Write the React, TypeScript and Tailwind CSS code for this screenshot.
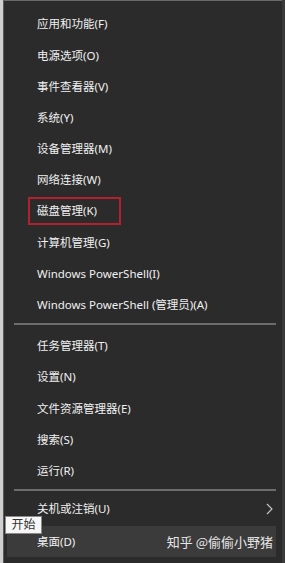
import React from "react";

const font = '"Noto Sans", "Noto Sans CJK SC", sans-serif';

const group1 = [
  "应用和功能(F)",
  "电源选项(O)",
  "事件查看器(V)",
  "系统(Y)",
  "设备管理器(M)",
  "网络连接(W)",
  "磁盘管理(K)",
  "计算机管理(G)",
  "Windows PowerShell(I)",
  "Windows PowerShell (管理员)(A)",
];
const group2 = ["任务管理器(T)", "设置(N)", "文件资源管理器(E)", "搜索(S)", "运行(R)"];

function Item({ label, boxed }: { label: string; boxed?: boolean }) {
  return (
    <div className="relative flex h-[31.2px] items-center pl-[33px] text-[11.5px] text-[#f0f0f0]">
      {boxed && (
        <div className="absolute left-[24px] top-[1.4px] h-[28px] w-[93px] border-2 border-[#b3202f]" />
      )}
      <span className="relative">{label}</span>
    </div>
  );
}

export default function App() {
  return (
    <div
      className="relative flex h-[563px] w-[285px] overflow-hidden bg-[#2b2b2b]"
      style={{ fontFamily: font }}
    >
      <div className="w-[3px] bg-[#cfcfcf]" />
      <div className="w-[1px] bg-[#5a5a5a]" />
      <div className="flex flex-1 flex-col border-t border-[#6a6a6a] pt-[7.4px]">
        {group1.map((l) => (
          <Item key={l} label={l} boxed={l.startsWith("磁盘")} />
        ))}
        <div className="flex h-[10px] flex-col pt-[3px]">
          <div className="ml-[10px] mr-[6px] h-[2px] bg-[#6c6c6c]" />
        </div>
        {group2.map((l) => (
          <Item key={l} label={l} />
        ))}
        <div className="flex h-[7px] flex-col pt-[2.5px]">
          <div className="ml-[10px] mr-[6px] h-[2px] bg-[#6c6c6c]" />
        </div>
        <div className="relative flex h-[31.2px] items-center pl-[33px] text-[11.5px] text-[#f0f0f0]">
          <span>关机或注销(U)</span>
          <svg
            className="absolute right-[9px] top-[10px]"
            width="7"
            height="12"
            viewBox="0 0 7 12"
            fill="none"
          >
            <path d="M1 1l5 5-5 5" stroke="#c8c8c8" strokeWidth="1.1" />
          </svg>
        </div>
        <div className="relative mt-[1.4px] ml-[3px] mr-[6px] flex h-[31px] items-center bg-[#3b3b3b] pl-[30px] text-[11.5px] text-[#f0f0f0]">
          <span>桌面(D)</span>
          <span
            className="absolute right-[3px] top-[7px] text-[13px] leading-[17px] text-[#e6e6e6]"
            style={{ fontFamily: '"Noto Sans CJK SC", sans-serif' }}
          >
            知乎 @偷偷小野猪
          </span>
        </div>
      </div>
      <div className="w-[3px] bg-[#3a3a3a]" />
      <div className="absolute left-[5px] top-[516px] flex h-[18px] w-[37px] items-center justify-center border border-[#8a8a8a] bg-[#f7f7f7] text-[12px] text-[#333]">
        开始
      </div>
    </div>
  );
}
